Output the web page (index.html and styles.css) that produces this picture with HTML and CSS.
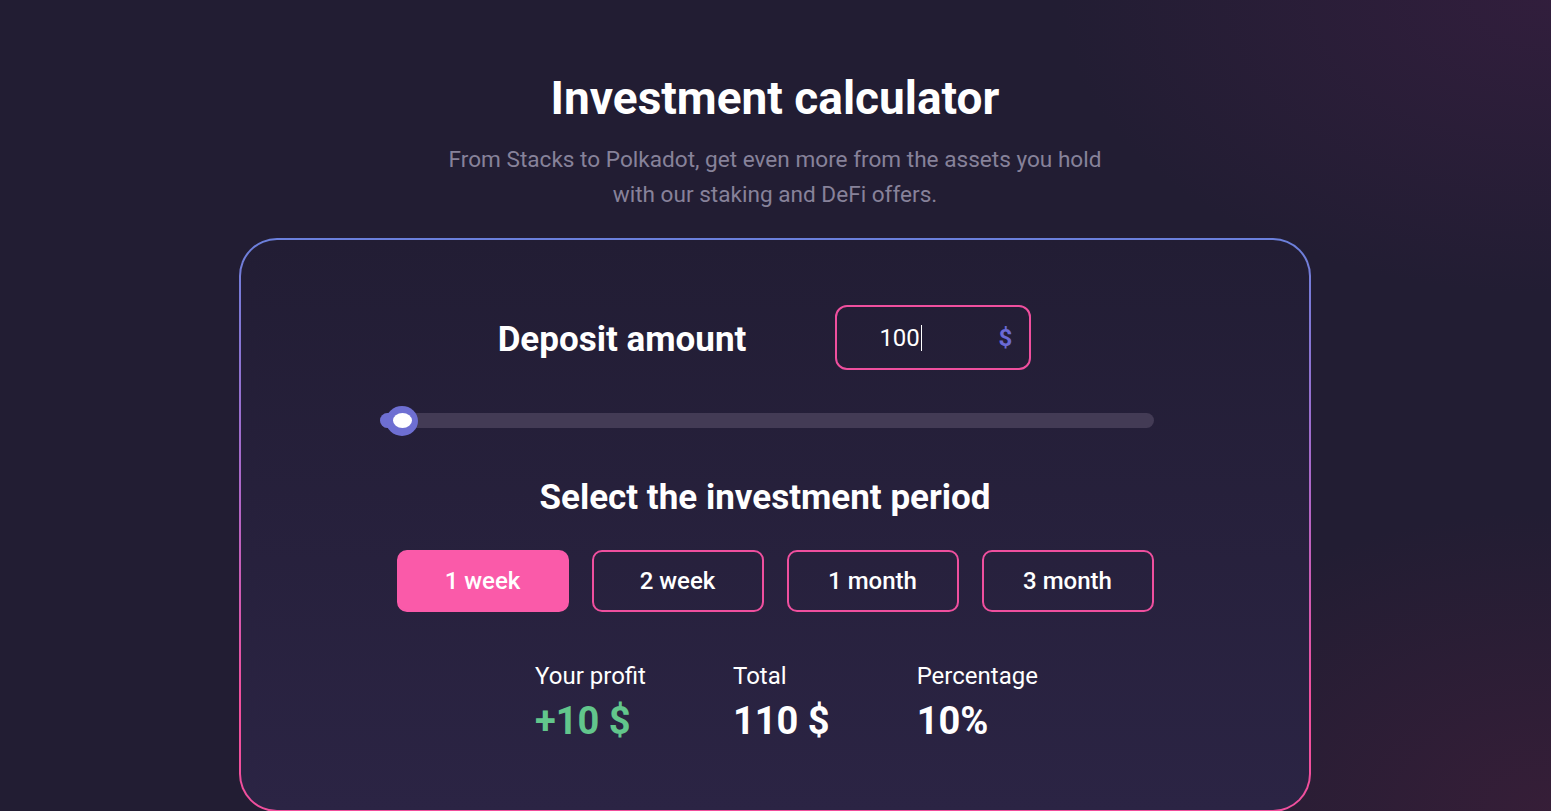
FILE: index.html
```html
<!DOCTYPE html>
<html lang="en">
<head>
<meta charset="utf-8">
<title>Investment calculator</title>
<link rel="stylesheet" href="styles.css">
</head>
<body>
<main class="page">
  <h1 class="title">Investment calculator</h1>
  <p class="subtitle">From Stacks to Polkadot, get even more from the assets you hold<br>with our staking and DeFi offers.</p>
  <section class="card">
    <div class="deposit-row">
      <h2 class="deposit-label">Deposit amount</h2>
      <div class="amount-input">
        <span class="amount-value">100<span class="caret"></span></span>
        <span class="amount-currency">$</span>
      </div>
    </div>
    <div class="slider">
      <div class="slider-fill" style="width: 22px"></div>
      <div class="slider-thumb" style="left: 22px"><span class="thumb-dot"></span></div>
    </div>
    <h2 class="period-title">Select the investment period</h2>
    <div class="periods">
      <button class="period active">1 week</button>
      <button class="period">2 week</button>
      <button class="period">1 month</button>
      <button class="period">3 month</button>
    </div>
    <div class="results">
      <div class="result">
        <div class="result-label">Your profit</div>
        <div class="result-value profit">+10 $</div>
      </div>
      <div class="result">
        <div class="result-label">Total</div>
        <div class="result-value">110 $</div>
      </div>
      <div class="result">
        <div class="result-label">Percentage</div>
        <div class="result-value">10%</div>
      </div>
    </div>
  </section>
</main>
</body>
</html>
```
FILE: styles.css
```css
* { box-sizing: border-box; }
html, body {
  margin: 0;
  height: 811px;
  overflow: hidden;
}
body {
  font-family: Roboto, "Noto Sans", "Liberation Sans", sans-serif;
  color: #fff;
  background:
    radial-gradient(ellipse 700px 420px at 100% 0%, rgba(52, 30, 62, 0.85), rgba(52, 30, 62, 0) 70%),
    radial-gradient(ellipse 600px 400px at 100% 100%, rgba(56, 30, 56, 0.9), rgba(56, 30, 56, 0) 75%),
    #221d33;
}
.page {
  display: flex;
  flex-direction: column;
  align-items: center;
  padding-top: 72px;
  padding-right: 1px;
}
.title {
  margin: 0;
  font-size: 46px;
  line-height: 52px;
  font-weight: 700;
  letter-spacing: 0;
}
.subtitle {
  margin: 18px 0 0;
  font-size: 22.6px;
  line-height: 35px;
  color: #87829a;
  text-align: center;
}
.card {
  margin-top: 26px;
  width: 1072px;
  height: 574px;
  border: 2px solid transparent;
  border-radius: 38px;
  background:
    linear-gradient(180deg, #221d34 0%, #2b2444 100%) padding-box,
    linear-gradient(180deg, #6b80dc 0%, #b067c8 45%, #f14f9d 80%, #f14f9d 100%) border-box;
  display: flex;
  flex-direction: column;
  padding-top: 65px;
}
.deposit-row {
  display: flex;
  align-items: center;
  justify-content: center;
  gap: 89px;
  padding-right: 21px;
}
.deposit-label {
  margin: 0;
  padding-top: 4px;
  font-size: 35px;
  font-weight: 700;
  line-height: 40px;
}
.amount-input {
  width: 196px;
  height: 65px;
  border: 2px solid #ef4f9e;
  border-radius: 12px;
  display: flex;
  align-items: center;
  justify-content: space-between;
  padding: 0 17px 0 42px;
}
.amount-value {
  font-size: 24px;
  display: flex;
  align-items: center;
}
.caret {
  display: inline-block;
  width: 1px;
  height: 26px;
  background: #fff;
  margin-left: 1px;
}
.amount-currency {
  font-size: 24px;
  font-weight: 700;
  color: #6a6ad4;
}
.slider {
  position: relative;
  margin: 43px 0 0 139px;
  width: 774px;
  height: 15px;
  border-radius: 8px;
  background: #433b55;
}
.slider-fill {
  height: 15px;
  border-radius: 8px 0 0 8px;
  background: #6e6fd2;
}
.slider-thumb {
  position: absolute;
  top: 50%;
  width: 32px;
  height: 30px;
  margin: -15px 0 0 -16px;
  border-radius: 50%;
  background: #6e6fd2;
  display: flex;
  align-items: center;
  justify-content: center;
}
.thumb-dot {
  width: 19px;
  height: 15px;
  border-radius: 50%;
  background: #fff;
}
.period-title {
  margin: 50px 0 0;
  padding-right: 20px;
  text-align: center;
  font-size: 35px;
  font-weight: 700;
  line-height: 40px;
}
.periods {
  display: flex;
  justify-content: center;
  gap: 23px;
  margin-top: 32px;
}
.period {
  width: 172px;
  height: 62px;
  border: 2px solid #ef4f9e;
  border-radius: 10px;
  background: transparent;
  color: #fff;
  font-family: inherit;
  font-size: 24px;
  font-weight: 500;
  cursor: pointer;
}
.period.active {
  background: #fa5aa9;
  border-color: #fa5aa9;
}
.results {
  display: flex;
  justify-content: center;
  gap: 87px;
  padding-left: 23px;
  margin-top: 50px;
}
.result-label {
  font-size: 24px;
  line-height: 28px;
}
.result-value {
  font-size: 38px;
  font-weight: 700;
  line-height: 44px;
  margin-top: 9px;
}
.result-value.profit {
  color: #62c68c;
}
```
